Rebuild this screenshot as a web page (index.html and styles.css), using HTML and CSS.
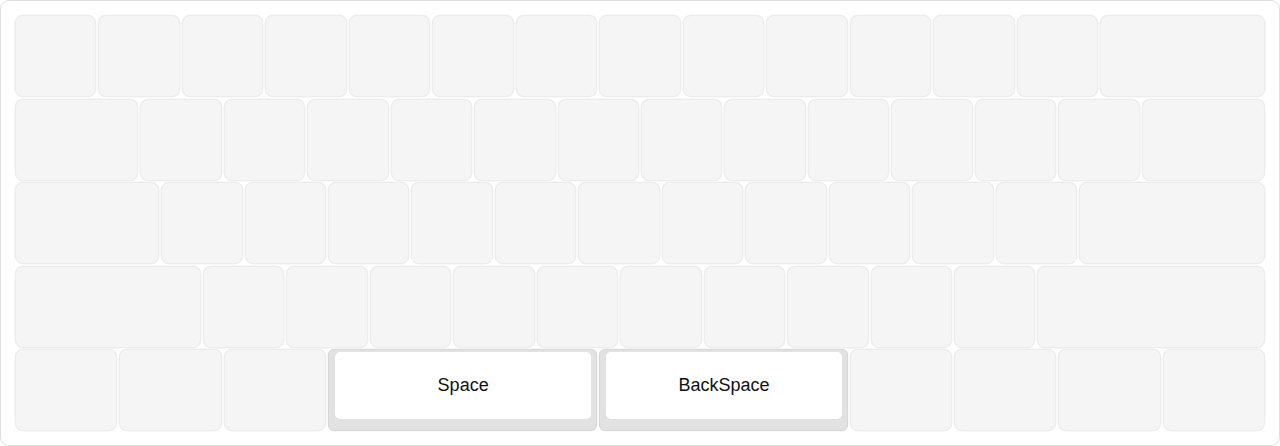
FILE: index.html
```html
<!DOCTYPE html>
<html lang="en">
<head>
<meta charset="utf-8">
<title>Keyboard</title>
<link rel="stylesheet" href="styles.css">
</head>
<body>
<div class="keyboard">
  <!-- row 1 -->
  <div class="key u4"></div><div class="key u4"></div><div class="key u4"></div><div class="key u4"></div>
  <div class="key u4"></div><div class="key u4"></div><div class="key u4"></div><div class="key u4"></div>
  <div class="key u4"></div><div class="key u4"></div><div class="key u4"></div><div class="key u4"></div>
  <div class="key u4"></div><div class="key u8"></div>
  <!-- row 2 -->
  <div class="key u6"></div>
  <div class="key u4"></div><div class="key u4"></div><div class="key u4"></div><div class="key u4"></div>
  <div class="key u4"></div><div class="key u4"></div><div class="key u4"></div><div class="key u4"></div>
  <div class="key u4"></div><div class="key u4"></div><div class="key u4"></div><div class="key u4"></div>
  <div class="key u6"></div>
  <!-- row 3 -->
  <div class="key u7"></div>
  <div class="key u4"></div><div class="key u4"></div><div class="key u4"></div><div class="key u4"></div>
  <div class="key u4"></div><div class="key u4"></div><div class="key u4"></div><div class="key u4"></div>
  <div class="key u4"></div><div class="key u4"></div><div class="key u4"></div>
  <div class="key u9"></div>
  <!-- row 4 -->
  <div class="key u9"></div>
  <div class="key u4"></div><div class="key u4"></div><div class="key u4"></div><div class="key u4"></div>
  <div class="key u4"></div><div class="key u4"></div><div class="key u4"></div><div class="key u4"></div>
  <div class="key u4"></div><div class="key u4"></div>
  <div class="key u11"></div>
  <!-- row 5 -->
  <div class="key u5"></div><div class="key u5"></div><div class="key u5"></div>
  <div class="key pressed u13"><span class="cap">Space</span></div>
  <div class="key pressed u12"><span class="cap">BackSpace</span></div>
  <div class="key u5"></div><div class="key u5"></div><div class="key u5"></div><div class="key u5"></div>
</div>
</body>
</html>
```

FILE: styles.css
```css
* { box-sizing: border-box; }
html, body { margin: 0; padding: 0; background: #ffffff; }
body { font-family: "Liberation Sans", Arial, sans-serif; }

.keyboard {
  width: 1280px;
  height: 446px;
  border: 1px solid #dedede;
  border-radius: 9px;
  padding: 14px;
  display: grid;
  grid-template-columns: repeat(60, 1fr);
  grid-auto-rows: 1fr;
  column-gap: 2px;
  row-gap: 1.5px;
  background: #ffffff;
}

.key {
  background: #f5f5f5;
  border: 1px solid #ececec;
  border-radius: 8px;
  box-shadow: 0 0 0 0.5px #f2f2f2;
}

.u4 { grid-column: span 4; }
.u5 { grid-column: span 5; }
.u6 { grid-column: span 6; }
.u7 { grid-column: span 7; }
.u8 { grid-column: span 8; }
.u9 { grid-column: span 9; }
.u11 { grid-column: span 11; }
.u12 { grid-column: span 12; }
.u13 { grid-column: span 13; }

.key.pressed {
  background: #e2e2e2;
  border: 1px solid #d7d7d7;
  border-radius: 6px;
  padding: 2px 5px 11px 6px;
  display: flex;
}

.cap {
  flex: 1;
  background: #ffffff;
  border-radius: 5px;
  display: flex;
  align-items: center;
  justify-content: center;
  font-size: 18px;
  color: #111111;
}
```
